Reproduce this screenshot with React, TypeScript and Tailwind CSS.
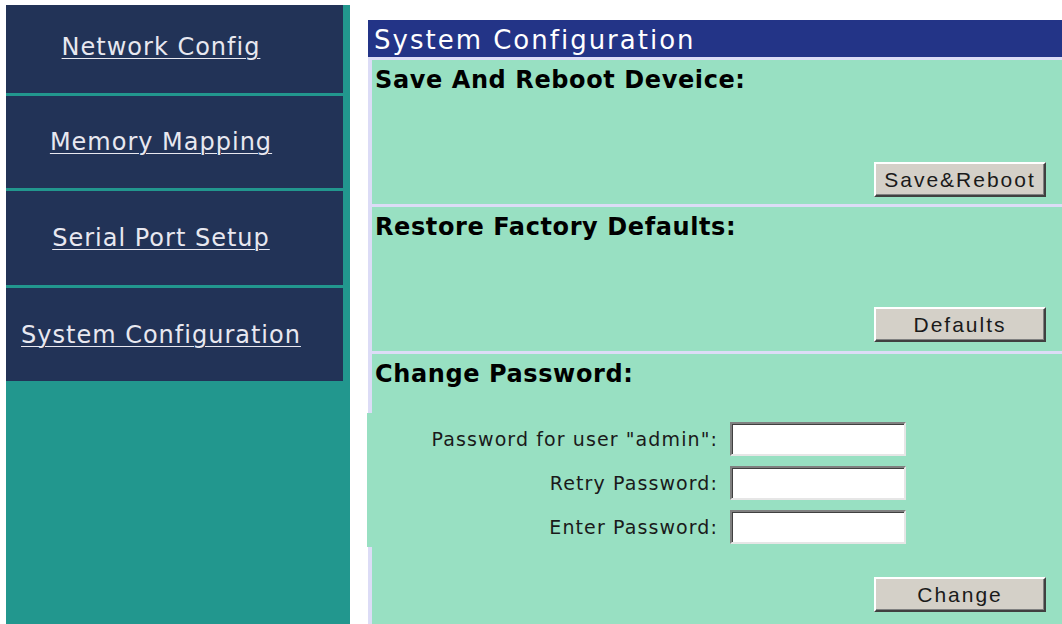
import React from 'react';

const navItems = [
  { label: 'Network Config', className: 'h-[88px] pb-[4px]' },
  { label: 'Memory Mapping', className: 'h-[92px]' },
  { label: 'Serial Port Setup', className: 'h-[94px]' },
  { label: 'System Configuration', className: 'h-[93px]' },
];

const passwordFields = ['Password for user "admin":', 'Retry Password:', 'Enter Password:'];

// Win-classic style push button
function ClassicButton({ children }: { children: React.ReactNode }) {
  return (
    <button
      type="button"
      className="w-[172px] h-[35px] bg-[#d4d0c8] border-2 border-t-white border-l-white border-r-[#404040] border-b-[#404040] shadow-[inset_-1px_-1px_0_#808080] font-['Liberation_Sans',Arial,sans-serif] text-[21px] leading-none tracking-[2px] text-[#1a1a1a]"
    >
      {children}
    </button>
  );
}

function SectionTitle({ children }: { children: React.ReactNode }) {
  return (
    <h2 className="pl-[3px] font-['DejaVu_Sans',Verdana,sans-serif] font-bold text-[24px] leading-[28px] tracking-[0.6px] text-black">
      {children}
    </h2>
  );
}

export default function App() {
  return (
    <div className="flex items-stretch pt-[5px] pl-[6px] bg-white font-['DejaVu_Sans',Verdana,sans-serif]">
      {/* left navigation */}
      <aside className="w-[344px] shrink-0 bg-[#22978e] pr-[7px]">
        <nav className="flex flex-col gap-[3px]">
          {navItems.map((item) => (
            <div
              key={item.label}
              className={`${item.className} bg-[#223357] flex items-center justify-center pr-[27px]`}
            >
              <a
                href="#"
                className="text-[#e8e8f0] text-[24px] tracking-[1px] underline decoration-1 underline-offset-[3px] whitespace-nowrap"
              >
                {item.label}
              </a>
            </div>
          ))}
        </nav>
      </aside>

      {/* main panel */}
      <main className="flex-1 ml-[18px] mt-[15px] flex flex-col">
        <div className="h-[37px] bg-[#233487] flex items-center pt-[4px] pl-[6px]">
          <span className="text-white text-[26px] tracking-[2px] whitespace-nowrap">System Configuration</span>
        </div>

        <div className="bg-[#dcdcf6] pl-[4px] pt-[3px] flex flex-col gap-[3px]">
          <section className="h-[144px] bg-[#98e0c2] flex flex-col pt-[6px] pr-[16px] pb-[7px]">
            <SectionTitle>Save And Reboot Deveice:</SectionTitle>
            <div className="mt-auto flex justify-end">
              <ClassicButton>Save&amp;Reboot</ClassicButton>
            </div>
          </section>

          <section className="h-[144px] bg-[#98e0c2] flex flex-col pt-[6px] pr-[16px] pb-[9px]">
            <SectionTitle>Restore Factory Defaults:</SectionTitle>
            <div className="mt-auto flex justify-end">
              <ClassicButton>Defaults</ClassicButton>
            </div>
          </section>

          <section className="bg-[#98e0c2] flex flex-col pt-[6px] pr-[16px] pb-[12px]">
            <SectionTitle>Change Password:</SectionTitle>
            <div className="mt-[25px] -ml-[5px] bg-[#98e0c2] pt-[9px] pb-[3px] flex flex-col gap-[10px]">
              {passwordFields.map((label) => (
                <div key={label} className="flex items-center gap-[12px]">
                  <label className="w-[351px] text-right text-[19px] tracking-[1.1px] text-[#1a1a1a] whitespace-nowrap">
                    {label}
                  </label>
                  <input
                    type="password"
                    className="w-[176px] h-[34px] bg-white border-2 border-t-[#808080] border-l-[#808080] border-r-[#e6e6e6] border-b-[#e6e6e6] shadow-[inset_1px_1px_0_#404040] outline-none"
                  />
                </div>
              ))}
            </div>
            <div className="mt-[30px] flex justify-end">
              <ClassicButton>Change</ClassicButton>
            </div>
          </section>
        </div>
      </main>
    </div>
  );
}
